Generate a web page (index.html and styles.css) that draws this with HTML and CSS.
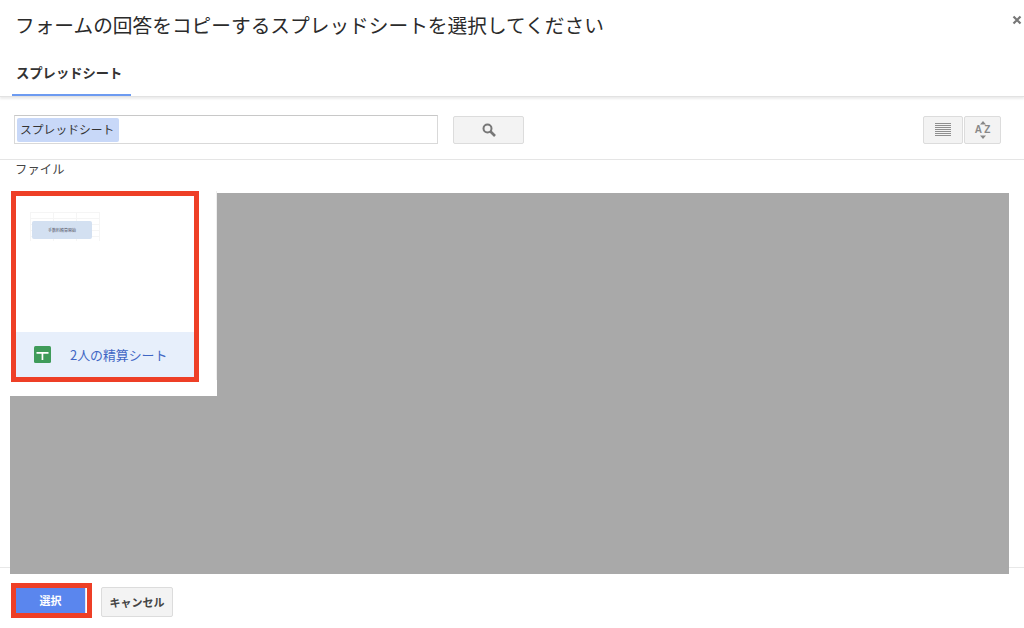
FILE: index.html
```html
<!DOCTYPE html>
<html lang="ja">
<head>
    <meta charset="UTF-8">
    <title>スプレッドシートを選択</title>
    <link rel="stylesheet" href="styles.css">
</head>
<body>
    <div class="dialog">
        <div class="header">
            <h1 class="title">フォームの回答をコピーするスプレッドシートを選択してください</h1>
            <svg class="close" width="10" height="10" viewBox="0 0 10 10">
                <path d="M1.5 1.5l7 7M8.5 1.5l-7 7" stroke="#777" stroke-width="2.200" fill="none"/>
            </svg>
        </div>

        <div class="tabs">
            <div class="tab">スプレッドシート</div>
        </div>

        <div class="toolbar">
            <div class="search-input"><span class="selected-text">スプレッドシート</span></div>
            <div class="btn search-btn">
                <svg width="16" height="16" viewBox="0 0 16 16">
                    <circle cx="6.5" cy="6.5" r="4" stroke="#777" stroke-width="2" fill="none"/>
                    <path d="M9.5 9.5l4.5 4.5" stroke="#777" stroke-width="2.6" fill="none"/>
                </svg>
            </div>
            <div class="view-btns">
                <div class="btn list-btn">
                    <svg width="16" height="14" viewBox="0 0 16 14">
                        <path d="M0 .5h16M0 2.500h16M0 4.500h16M0 6.500h16M0 8.500h16M0 10.500h16M0 12.500h16" stroke="#8f8f8f" stroke-width="1"/>
                    </svg>
                </div>
                <div class="btn sort-btn">
                    <svg width="12" height="18" viewBox="0 0 12 18">
                        <path d="M6 0l3 3.500H3zM6 18l-3-3.500h6z" fill="#888"/>
                    </svg>
                    <span class="az">A Z</span>
                </div>
            </div>
        </div>

        <div class="section-label">ファイル</div>

        <div class="files">
            <div class="files-row">
                <div class="tile-slot">
                    <div class="tile">
                        <div class="thumb">
                            <div class="thumb-sheet"><span class="thumb-text">手数料精算開始</span></div>
                        </div>
                        <div class="tile-name">
                            <svg class="sheet-icon" width="17" height="17" viewBox="0 0 17 17">
                                <rect width="17" height="17" rx="1.500" fill="#3f9b5a"/>
                                <path d="M2.500 6h12v1.700H9.300V14H7.600V7.700H2.500z" fill="#fff"/>
                            </svg>
                            <span>2人の精算シート</span>
                        </div>
                    </div>
                </div>
                <div class="redacted"></div>
            </div>
            <div class="redacted redacted-wide"></div>
        </div>

        <div class="footer">
            <div class="select-wrap"><div class="btn-primary">選択</div></div>
            <div class="btn cancel-btn">キャンセル</div>
        </div>
    </div>
</body>
</html>
```

FILE: styles.css
```css
* {
    margin: 0;
    padding: 0;
    box-sizing: border-box;
}

body {
    font-family: "Noto Sans CJK JP", "Liberation Sans", sans-serif;
    background: white;
    color: #333;
    width: 1024px;
    height: 628px;
    overflow: hidden;
}

.dialog {
    display: flex;
    flex-direction: column;
    height: 628px;
}

.header {
    display: flex;
    justify-content: space-between;
    height: 52px;
    padding: 10px 2px 0 15px;
}

.title {
    font-size: 19.7px;
    font-weight: 400;
    line-height: 29px;
    color: #2b2b2b;
}

.close {
    margin: 5px 0 0 0;
}

.tabs {
    height: 45px;
    padding-left: 12px;
    border-bottom: 1px solid #e2e2e2;
    box-shadow: 0 2px 2px rgba(0, 0, 0, 0.08);
}

.tab {
    width: 119px;
    height: 44px;
    padding: 9px 0 0 4px;
    font-size: 13.3px;
    font-weight: 700;
    line-height: 24px;
    color: #333;
    border-bottom: 2px solid #6d9bf1;
}

.toolbar {
    display: flex;
    align-items: flex-start;
    height: 63px;
    padding: 18px 23px 0 14px;
    border-bottom: 1px solid #e5e5e5;
}

.search-input {
    width: 424px;
    height: 29px;
    padding: 2px;
    border: 1px solid #d9d9d9;
    border-top-color: #c8c8c8;
}

.selected-text {
    display: block;
    width: 102px;
    height: 24px;
    padding-left: 3px;
    font-size: 11.8px;
    line-height: 21px;
    white-space: nowrap;
    color: #333;
    background: #c8d8f8;
    border-radius: 2px;
}

.btn {
    display: flex;
    align-items: center;
    justify-content: center;
    height: 28px;
    background: #f3f3f3;
    border: 1px solid #dcdcdc;
    border-radius: 2px;
}

.search-btn {
    width: 71px;
    margin: 1px 0 0 15px;
}

.view-btns {
    display: flex;
    gap: 1px;
    margin: 1px 0 0 auto;
}

.list-btn {
    width: 40px;
}

.sort-btn {
    position: relative;
    width: 37px;
}

.az {
    position: absolute;
    top: 7px;
    left: 0;
    width: 100%;
    font-family: "Liberation Sans", sans-serif;
    font-size: 10px;
    font-weight: 700;
    line-height: 12px;
    text-align: center;
    color: #888;
}

.section-label {
    height: 33px;
    font-size: 12.3px;
    line-height: 18px;
    letter-spacing: 0.1px;
    padding-left: 15px;
    color: #444;
}

/* faint footer rule shows only beside the grey block */
.files {
    height: 381px;
    padding: 0 15px 0 10px;
    background: linear-gradient(#e8e8e8, #e8e8e8) 0 374px / 100% 1px no-repeat;
}

.files-row {
    display: flex;
    height: 203px;
    background: white;
}

.tile-slot {
    width: 207px;
    height: 189px;
    margin-top: -2px;
    border-right: 1px solid #eee;
}

.tile {
    display: flex;
    flex-direction: column;
    width: 188px;
    height: 191px;
    margin-left: 1px;
    background: white;
    border: 5px solid #ee3f26;
}

.thumb {
    flex: 1;
    padding: 16px 0 0 14px;
}

.thumb-sheet {
    width: 70px;
    height: 29px;
    padding: 9px 0 0 2px;
    background-image:
        linear-gradient(#f5f5f5 1px, transparent 1px),
        linear-gradient(90deg, #f5f5f5 1px, transparent 1px);
    background-size: 23px 6px;
}

.thumb-text {
    display: block;
    width: 60px;
    height: 18px;
    font-size: 4px;
    line-height: 18px;
    text-align: center;
    color: #556;
    background: #d3e0f1;
    border-radius: 2px;
}

.tile-name {
    display: flex;
    align-items: center;
    height: 45px;
    padding-left: 18px;
    font-size: 12.9px;
    color: #3f66c4;
    background: #e7effb;
}

.sheet-icon {
    margin-right: 19px;
}

.redacted {
    flex: 1;
    background: #a9a9a9;
}

.redacted-wide {
    height: 178px;
}

.footer {
    display: flex;
    align-items: flex-start;
    flex: 1;
    padding: 9px 0 0 11px;
    gap: 9px;
}

.select-wrap {
    border: 5px solid #ee3f26;
    width: 81px;
    height: 35px;
}

.btn-primary {
    width: 70px;
    height: 25px;
    font-size: 11px;
    font-weight: 700;
    line-height: 25px;
    text-align: center;
    color: white;
    background: #5a86ee;
    border-right: 1px solid #dfe8fb;
}

.cancel-btn {
    width: 72px;
    height: 30px;
    margin-top: 4px;
    padding-bottom: 1px;
    font-size: 11px;
    font-weight: 700;
    color: #444;
}
```
